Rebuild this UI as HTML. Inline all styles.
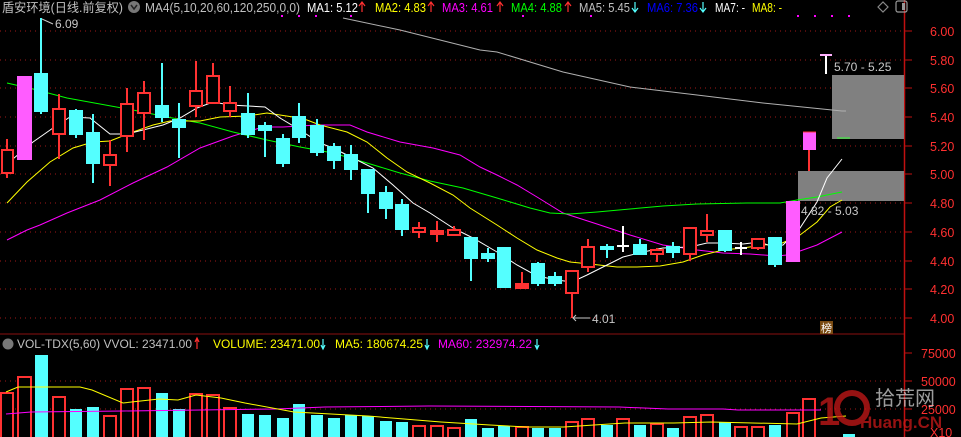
<!DOCTYPE html>
<html><head><meta charset="utf-8"><style>
html,body{margin:0;padding:0;background:#000;width:961px;height:437px;overflow:hidden}
svg{display:block}
text{font-family:"Liberation Sans","Noto Sans CJK SC",sans-serif}
</style></head><body>
<svg width="961" height="437" viewBox="0 0 961 437" xmlns="http://www.w3.org/2000/svg">
<rect width="961" height="437" fill="#000"/>
<g stroke="#a01818" stroke-width="1" stroke-dasharray="1,4">
<line x1="0" y1="31" x2="904" y2="31"/><line x1="0" y1="60" x2="904" y2="60"/><line x1="0" y1="88" x2="904" y2="88"/><line x1="0" y1="117" x2="904" y2="117"/><line x1="0" y1="146" x2="904" y2="146"/><line x1="0" y1="174" x2="904" y2="174"/><line x1="0" y1="203" x2="904" y2="203"/><line x1="0" y1="232" x2="904" y2="232"/><line x1="0" y1="261" x2="904" y2="261"/><line x1="0" y1="289" x2="904" y2="289"/><line x1="0" y1="318" x2="904" y2="318"/>
<line x1="0" y1="381" x2="904" y2="381"/><line x1="0" y1="409" x2="904" y2="409"/>
</g>
<line x1="0" y1="334" x2="904" y2="334" stroke="#8a1010"/>
<line x1="904.5" y1="0" x2="904.5" y2="437" stroke="#c01010" stroke-width="1.5"/>
<g stroke="#c01010"><line x1="904" y1="31" x2="912" y2="31"/><line x1="904" y1="60" x2="912" y2="60"/><line x1="904" y1="88" x2="912" y2="88"/><line x1="904" y1="117" x2="912" y2="117"/><line x1="904" y1="146" x2="912" y2="146"/><line x1="904" y1="174" x2="912" y2="174"/><line x1="904" y1="203" x2="912" y2="203"/><line x1="904" y1="232" x2="912" y2="232"/><line x1="904" y1="261" x2="912" y2="261"/><line x1="904" y1="289" x2="912" y2="289"/><line x1="904" y1="318" x2="912" y2="318"/><line x1="904" y1="353" x2="912" y2="353"/><line x1="904" y1="381" x2="912" y2="381"/><line x1="904" y1="409" x2="912" y2="409"/></g>
<g fill="#ff3030" font-size="12.5">
<text x="930" y="36">6.00</text><text x="930" y="65">5.80</text><text x="930" y="93">5.60</text><text x="930" y="122">5.40</text><text x="930" y="151">5.20</text><text x="930" y="179">5.00</text><text x="930" y="208">4.80</text><text x="930" y="237">4.60</text><text x="930" y="266">4.40</text><text x="930" y="294">4.20</text><text x="930" y="323">4.00</text>
<text x="921" y="358">75000</text><text x="921" y="386">50000</text><text x="921" y="414">25000</text><text x="930" y="437">X10</text>
</g>
<rect x="832" y="75" width="72" height="64" fill="#808080"/>
<rect x="798" y="171" width="106" height="30" fill="#808080"/>
<line x1="837" y1="138" x2="850" y2="138" stroke="#3f3"/>
<g fill="none" stroke-width="1">
<polyline stroke="#b0b0b0" points="343,18 400,30 480,50 497,52 563,72 630,87 697,95 763,103 842,111 846,111"/>
<polyline stroke="#ff00ff" points="7,240 27,230 40,225 67,213 100,200 133,183 167,167 200,148 233,136 263,127 283,127 317,125 350,125 367,132 400,142 433,148 460,155 480,167 497,175 517,185 537,197 563,213 597,224 630,235 663,245 697,250 723,253 750,254 777,256 787,255 800,251 817,245 842,232"/>
<polyline stroke="#00ff00" points="7,83 33,89 67,98 100,104 133,110 167,117 200,123 233,132 267,140 300,147 333,153 367,163 400,173 430,181 463,188 497,198 530,208 550,213 570,214 597,212 630,209 663,206 697,204 747,203 780,203 797,200 817,197 842,192"/>
<polyline stroke="#ffff00" points="7,203 27,182 50,162 73,148 93,142 110,141 133,132 153,125 170,121 200,121 220,117 247,116 267,113 293,117 307,120 320,125 347,132 367,142 387,158 407,172 430,183 453,195 470,208 497,225 517,238 537,250 557,258 570,262 590,264 617,267 637,267 660,266 683,262 703,255 723,250 743,248 763,245 780,244 800,235 817,222 830,207 842,200"/>
<polyline stroke="#ffffff" points="7,164 33,142 53,128 70,117 90,118 110,134 127,134 143,130 163,125 180,118 197,108 213,102 230,105 265,107 280,118 300,130 320,143 333,148 353,158 373,168 393,185 413,203 430,213 453,228 473,238 497,252 517,265 537,276 557,280 572,282 587,275 607,265 623,257 643,252 663,248 690,247 707,243 723,243 743,244 760,242 773,247 783,245 800,228 817,202 827,178 842,159"/>
</g>
<g stroke-width="2">
<g stroke="#ff3232" fill="#000">
<line x1="7" y1="139" x2="7" y2="178"/><rect x="2" y="150" width="11" height="23"/>
<line x1="59" y1="94" x2="59" y2="159"/><rect x="53" y="109" width="12" height="25"/>
<line x1="110" y1="140" x2="110" y2="186"/><rect x="104" y="155" width="12" height="10"/>
<line x1="127" y1="88" x2="127" y2="152"/><rect x="121" y="104" width="12" height="32"/>
<line x1="144" y1="81" x2="144" y2="140"/><rect x="138" y="93" width="12" height="20"/>
<line x1="196" y1="61" x2="196" y2="117"/><rect x="190" y="91" width="12" height="15"/>
<line x1="213" y1="63" x2="213" y2="104"/><rect x="207" y="76" width="12" height="27"/>
<line x1="230" y1="86" x2="230" y2="117"/><rect x="224" y="103" width="12" height="8"/>
<line x1="419" y1="222" x2="419" y2="238"/><rect x="413" y="228" width="12" height="4"/>
<line x1="454" y1="226" x2="454" y2="236"/><rect x="448" y="230" width="12" height="5"/>
<line x1="572" y1="270" x2="572" y2="318"/><rect x="566" y="271" width="12" height="22"/>
<line x1="588" y1="239" x2="588" y2="272"/><rect x="582" y="247" width="12" height="20"/>
<line x1="657" y1="248" x2="657" y2="262"/><rect x="651" y="250" width="12" height="4"/>
<line x1="690" y1="228" x2="690" y2="261"/><rect x="684" y="228" width="12" height="26"/>
<line x1="707" y1="214" x2="707" y2="242"/><rect x="701" y="231" width="12" height="4"/>
<line x1="758" y1="238" x2="758" y2="250"/><rect x="752" y="239" width="12" height="9"/>
<line x1="437" y1="221" x2="437" y2="242"/><rect x="431" y="231" width="12" height="3" fill="#ff3232"/>
<line x1="522" y1="272" x2="522" y2="288"/><rect x="516" y="284" width="12" height="4" fill="#ff3232"/>
<line x1="809" y1="150" x2="809" y2="171"/>
</g>
<g stroke="#54ffff" fill="#54ffff">
<line x1="41" y1="18" x2="41" y2="114"/><rect x="35" y="74" width="12" height="37"/>
<line x1="76" y1="109" x2="76" y2="138"/><rect x="70" y="111" width="12" height="23"/>
<line x1="93" y1="114" x2="93" y2="183"/><rect x="87" y="133" width="12" height="30"/>
<line x1="162" y1="63" x2="162" y2="122"/><rect x="156" y="106" width="12" height="11"/>
<line x1="179" y1="103" x2="179" y2="158"/><rect x="173" y="120" width="12" height="7"/>
<line x1="248" y1="93" x2="248" y2="138"/><rect x="242" y="114" width="12" height="20"/>
<line x1="265" y1="122" x2="265" y2="157"/><rect x="259" y="126" width="12" height="4"/>
<line x1="283" y1="134" x2="283" y2="167"/><rect x="277" y="139" width="12" height="24"/>
<line x1="299" y1="103" x2="299" y2="143"/><rect x="293" y="117" width="12" height="20"/>
<line x1="317" y1="119" x2="317" y2="156"/><rect x="311" y="126" width="12" height="26"/>
<line x1="334" y1="143" x2="334" y2="169"/><rect x="328" y="147" width="12" height="13"/>
<line x1="351" y1="145" x2="351" y2="180"/><rect x="345" y="155" width="12" height="14"/>
<line x1="368" y1="170" x2="368" y2="213"/><rect x="362" y="170" width="12" height="23"/>
<line x1="386" y1="186" x2="386" y2="219"/><rect x="380" y="193" width="12" height="15"/>
<line x1="402" y1="199" x2="402" y2="236"/><rect x="396" y="205" width="12" height="24"/>
<line x1="471" y1="238" x2="471" y2="281"/><rect x="465" y="238" width="12" height="20"/>
<line x1="488" y1="248" x2="488" y2="262"/><rect x="482" y="254" width="12" height="4"/>
<line x1="504" y1="248" x2="504" y2="288"/><rect x="498" y="248" width="12" height="39"/>
<line x1="538" y1="262" x2="538" y2="286"/><rect x="532" y="264" width="12" height="19"/>
<line x1="555" y1="272" x2="555" y2="286"/><rect x="549" y="277" width="12" height="6"/>
<line x1="607" y1="244" x2="607" y2="258"/><rect x="601" y="247" width="12" height="2"/>
<line x1="640" y1="239" x2="640" y2="254"/><rect x="634" y="245" width="12" height="9"/>
<line x1="673" y1="242" x2="673" y2="258"/><rect x="667" y="247" width="12" height="5"/>
<line x1="725" y1="231" x2="725" y2="252"/><rect x="719" y="231" width="12" height="19"/>
<line x1="775" y1="238" x2="775" y2="267"/><rect x="769" y="238" width="12" height="26"/>
</g>
<g stroke="#fff" fill="#fff">
<line x1="623" y1="226" x2="623" y2="252"/><line x1="617" y1="246" x2="629" y2="246"/>
<line x1="741" y1="242" x2="741" y2="255"/><line x1="735" y1="248" x2="747" y2="248"/>
<line x1="826" y1="55" x2="826" y2="74"/><line x1="820" y1="55" x2="832" y2="55" stroke="#ffb0ff"/>
</g>
</g>
<rect x="17" y="76" width="15" height="84" fill="#ff5cff"/>
<rect x="786" y="201" width="14" height="61" fill="#ff5cff"/>
<rect x="803" y="132" width="13" height="18" fill="#ff5cff"/>
<line x1="803" y1="132" x2="816" y2="132" stroke="#ff3232"/>
<g fill="#c8c8c8" font-size="12">
<text x="55" y="28">6.09</text>
<text x="592" y="323">4.01</text>
<text x="834" y="71">5.70 - 5.25</text>
<text x="801" y="215">4.82 - 5.03</text>
</g>
<g stroke="#c8c8c8" fill="none"><polyline points="42,19 53,24"/><polyline points="573,318 590,318"/><polyline points="576,315 573,318 576,321"/></g>
<rect x="820" y="321" width="13" height="13" fill="#7a4a10"/>
<text x="821" y="332" font-size="11" fill="#fff">榜</text>
<g fill="#ff00ff"><rect x="281" y="15" width="2" height="2"/><rect x="298" y="15" width="2" height="2"/><rect x="315" y="15" width="2" height="2"/><rect x="350" y="15" width="2" height="2"/><rect x="522" y="15" width="2" height="2"/><rect x="590" y="15" width="2" height="2"/><rect x="797" y="15" width="2" height="2"/><rect x="814" y="15" width="2" height="2"/><rect x="831" y="15" width="2" height="2"/><rect x="848" y="15" width="2" height="2"/></g>
<g font-size="12.5" lengthAdjust="spacingAndGlyphs">
<text x="2" y="12" fill="#c0c0c0" textLength="121" lengthAdjust="spacingAndGlyphs">盾安环境(日线.前复权)</text>
<circle cx="134" cy="7" r="6" fill="#777"/><path d="M131,5 L134,9 L137,5" stroke="#222" stroke-width="1.5" fill="none"/>
<text x="145" y="12" fill="#c0c0c0" textLength="155" lengthAdjust="spacingAndGlyphs">MA4(5,10,20,60,120,250,0,0)</text>
<text x="307" y="12" fill="#fff" textLength="51" lengthAdjust="spacingAndGlyphs">MA1: 5.12</text>
<text x="375" y="12" fill="#ffff00" textLength="51" lengthAdjust="spacingAndGlyphs">MA2: 4.83</text>
<text x="442" y="12" fill="#ff00ff" textLength="51" lengthAdjust="spacingAndGlyphs">MA3: 4.61</text>
<text x="511" y="12" fill="#00ff00" textLength="51" lengthAdjust="spacingAndGlyphs">MA4: 4.88</text>
<text x="579" y="12" fill="#c0c0c0" textLength="51" lengthAdjust="spacingAndGlyphs">MA5: 5.45</text>
<text x="647" y="12" fill="#0000ff" textLength="51" lengthAdjust="spacingAndGlyphs">MA6: 7.36</text>
<text x="715" y="12" fill="#fff" textLength="30" lengthAdjust="spacingAndGlyphs">MA7: -</text>
<text x="752" y="12" fill="#ffff00" textLength="30" lengthAdjust="spacingAndGlyphs">MA8: -</text>
</g>
<g stroke-width="1.2" fill="none">
<path d="M362,12 V3 M359,6 L362,2 L365,6" stroke="#ff3030"/>
<path d="M431,12 V3 M428,6 L431,2 L434,6" stroke="#ff3030"/>
<path d="M500,12 V3 M497,6 L500,2 L503,6" stroke="#ff3030"/>
<path d="M568,12 V3 M565,6 L568,2 L571,6" stroke="#ff3030"/>
<path d="M635,2 V11 M632,8 L635,12 L638,8" stroke="#54ffff"/>
<path d="M703,2 V11 M700,8 L703,12 L706,8" stroke="#54ffff"/>
<path d="M878,7 L883,2 L888,7 L883,12 Z" stroke="#888"/>
<rect x="896" y="1" width="11" height="11" rx="2" stroke="#999"/>
</g>
<rect x="902" y="3" width="3" height="7" fill="#999"/>
<g stroke="#ff3232" stroke-width="2" fill="#000">
<rect x="1" y="393" width="12" height="45"/><rect x="18" y="377" width="13" height="61"/><rect x="53" y="397" width="12" height="41"/><rect x="104" y="416" width="12" height="22"/><rect x="121" y="389" width="12" height="49"/><rect x="138" y="388" width="12" height="50"/><rect x="190" y="394" width="12" height="44"/><rect x="207" y="395" width="12" height="43"/><rect x="224" y="408" width="12" height="30"/><rect x="413" y="426" width="12" height="12"/><rect x="431" y="426" width="12" height="12"/><rect x="448" y="428" width="12" height="10"/><rect x="516" y="427" width="12" height="11"/><rect x="566" y="422" width="12" height="16"/><rect x="582" y="419" width="12" height="19"/><rect x="617" y="419" width="12" height="19"/><rect x="651" y="424" width="12" height="14"/><rect x="684" y="417" width="12" height="21"/><rect x="701" y="415" width="12" height="23"/><rect x="735" y="427" width="12" height="11"/><rect x="752" y="427" width="12" height="11"/><rect x="787" y="413" width="12" height="25"/><rect x="803" y="399" width="12" height="39"/>
</g>
<g fill="#54ffff">
<rect x="35" y="355" width="13" height="82"/><rect x="70" y="409" width="12" height="28"/><rect x="87" y="407" width="12" height="30"/><rect x="156" y="393" width="12" height="44"/><rect x="173" y="409" width="12" height="28"/><rect x="242" y="414" width="12" height="23"/><rect x="259" y="415" width="12" height="22"/><rect x="277" y="418" width="12" height="19"/><rect x="293" y="404" width="12" height="33"/><rect x="311" y="415" width="12" height="22"/><rect x="328" y="418" width="12" height="19"/><rect x="345" y="415" width="12" height="22"/><rect x="362" y="416" width="12" height="21"/><rect x="380" y="421" width="12" height="16"/><rect x="396" y="422" width="12" height="15"/><rect x="465" y="419" width="12" height="18"/><rect x="482" y="428" width="12" height="9"/><rect x="498" y="426" width="12" height="11"/><rect x="532" y="428" width="12" height="9"/><rect x="549" y="428" width="12" height="9"/><rect x="601" y="425" width="12" height="12"/><rect x="634" y="425" width="12" height="12"/><rect x="667" y="428" width="12" height="9"/><rect x="719" y="422" width="12" height="15"/><rect x="769" y="425" width="12" height="12"/><rect x="843" y="434" width="12" height="3"/>
</g>
<polyline fill="none" stroke="#ff00ff" points="6,414 31,412 123,411 276,409 325,407 429,406 619,407 668,409 723,409 738,410 821,410"/>
<polyline fill="none" stroke="#ffff00" points="6,392 18,387 67,387 80,387 92,390 123,403 159,399 178,400 196,395 221,398 245,403 294,412 331,414 368,416 404,419 441,422 490,425 527,427 564,427 594,425 625,423 674,423 711,422 797,424 821,418 846,416"/>
<g opacity="0.75">
<text x="818" y="425" font-size="40" font-weight="bold" fill="#c81818">1</text>
<circle cx="852" cy="408" r="15" fill="none" stroke="#c81818" stroke-width="6"/>
<text x="875" y="405" font-size="20" fill="#d0d0d0">拾荒网</text>
<text x="860" y="428" font-size="17" font-weight="bold" fill="#c81818">Huang.CN</text>
</g>
<g font-size="11.5">
<circle cx="8" cy="344" r="5.5" fill="#777"/>
<text x="17" y="348" fill="#c0c0c0" textLength="175" lengthAdjust="spacingAndGlyphs">VOL-TDX(5,60) VVOL: 23471.00</text>
<text x="213" y="348" fill="#ffff00" textLength="107" lengthAdjust="spacingAndGlyphs">VOLUME: 23471.00</text>
<text x="335" y="348" fill="#ffff00" textLength="88" lengthAdjust="spacingAndGlyphs">MA5: 180674.25</text>
<text x="438" y="348" fill="#ff00ff" textLength="94" lengthAdjust="spacingAndGlyphs">MA60: 232974.22</text>
</g>
<g stroke-width="1.2" fill="none">
<path d="M197,349 V339 M195,342 L197,338 L199,342" stroke="#ff3030"/>
<path d="M323,339 V348 M321,345 L323,349 L325,345" stroke="#54ffff"/>
<path d="M427,339 V348 M425,345 L427,349 L429,345" stroke="#54ffff"/>
<path d="M537,339 V348 M535,345 L537,349 L539,345" stroke="#54ffff"/>
</g>
</svg>
</body></html>
